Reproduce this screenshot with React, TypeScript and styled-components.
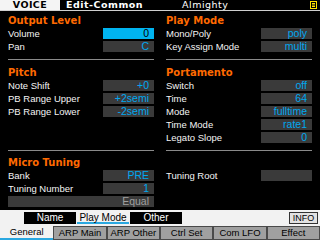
import React from 'react';
import styled, { createGlobalStyle } from 'styled-components';

const GlobalStyle = createGlobalStyle`
  html, body {
    margin: 0;
    padding: 0;
    background: #000;
  }
  * {
    box-sizing: border-box;
  }
`;

interface RowData {
    label?: string;
    value?: string;
    selected?: boolean;
    muted?: boolean;
    wide?: boolean;
}

interface ColumnData {
    title?: string;
    rows: RowData[];
}

const sections: { top: number; bottom: number; rule: boolean; left: ColumnData; right: ColumnData }[] = [
    {
        top: 4,
        bottom: 6,
        rule: true,
        left: {
            title: 'Output Level',
            rows: [
                { label: 'Volume', value: '0', selected: true },
                { label: 'Pan', value: 'C' },
            ],
        },
        right: {
            title: 'Play Mode',
            rows: [
                { label: 'Mono/Poly', value: 'poly' },
                { label: 'Key Assign Mode', value: 'multi' },
            ],
        },
    },
    {
        top: 7,
        bottom: 6,
        rule: true,
        left: {
            title: 'Pitch',
            rows: [
                { label: 'Note Shift', value: '+0' },
                { label: 'PB Range Upper', value: '+2semi' },
                { label: 'PB Range Lower', value: '-2semi' },
            ],
        },
        right: {
            title: 'Portamento',
            rows: [
                { label: 'Switch', value: 'off' },
                { label: 'Time', value: '64' },
                { label: 'Mode', value: 'fulltime' },
                { label: 'Time Mode', value: 'rate1' },
                { label: 'Legato Slope', value: '0' },
            ],
        },
    },
    {
        top: 6,
        bottom: 0,
        rule: false,
        left: {
            title: 'Micro Tuning',
            rows: [
                { label: 'Bank', value: 'PRE' },
                { label: 'Tuning Number', value: '1' },
                { value: 'Equal', muted: true, wide: true },
            ],
        },
        right: {
            title: '',
            rows: [{ label: 'Tuning Root', value: '' }],
        },
    },
];

const subTabs = [
    { name: 'Name', active: false },
    { name: 'Play Mode', active: true },
    { name: 'Other', active: false },
];

const mainTabs = ['General', 'ARP Main', 'ARP Other', 'Ctrl Set', 'Com LFO', 'Effect'];

const App: React.FC = () => {
    return (
        <>
            <GlobalStyle />
            <Screen>
                <Header>
                    <ModeBox>VOICE</ModeBox>
                    <PageName>Edit-Common</PageName>
                    <VoiceName>Almighty</VoiceName>
                    <MenuIcon width="8" height="8" viewBox="0 0 8 8">
                        <rect x="0.5" y="0.5" width="6" height="7" fill="none" stroke="#ffe000" strokeWidth="1" />
                        <line x1="2" y1="2.5" x2="5" y2="2.5" stroke="#ffe000" strokeWidth="1" />
                        <line x1="2" y1="4" x2="5" y2="4" stroke="#ffe000" strokeWidth="1" />
                        <line x1="2" y1="5.5" x2="5" y2="5.5" stroke="#ffe000" strokeWidth="1" />
                    </MenuIcon>
                </Header>
                <Body>
                    {sections.map((section, i) => (
                        <Section key={i}>
                            {[section.left, section.right].map((col, j) => (
                                <Column key={j} $top={section.top} $bottom={section.bottom} $rule={section.rule}>
                                    <Title>{col.title}</Title>
                                    {col.rows.map((row, k) => (
                                        <Row key={k}>
                                            {row.label && <Label>{row.label}</Label>}
                                            <ValueBox $selected={row.selected} $muted={row.muted} $wide={row.wide}>
                                                {row.value}
                                            </ValueBox>
                                        </Row>
                                    ))}
                                </Column>
                            ))}
                        </Section>
                    ))}
                </Body>
                <SubBar>
                    {subTabs.map((tab) => (
                        <SubTab key={tab.name} $active={tab.active}>{tab.name}</SubTab>
                    ))}
                    <InfoButton>INFO</InfoButton>
                </SubBar>
                <TabBar>
                    {mainTabs.map((tab, i) => (
                        <Tab key={tab} $active={i === 0}>{tab}</Tab>
                    ))}
                </TabBar>
            </Screen>
        </>
    );
};

export default App;

const Screen = styled.div`
  width: 320px;
  height: 240px;
  background: #000;
  display: flex;
  flex-direction: column;
  overflow: hidden;
  font-family: "Liberation Sans", Arial, sans-serif;
`;

const Header = styled.div`
  height: 11px;
  display: flex;
  align-items: flex-start;
  border-bottom: 1px solid #d0d0d0;
`;

const ModeBox = styled.div`
  width: 60px;
  height: 10px;
  background: #f4f4f4;
  color: #000;
  font-family: "DejaVu Sans", sans-serif;
  font-weight: bold;
  font-size: 9.5px;
  line-height: 10px;
  letter-spacing: 0.4px;
  text-align: center;
`;

const PageName = styled.div`
  width: 122px;
  height: 10px;
  padding-left: 6px;
  color: #fff;
  font-family: "DejaVu Sans", sans-serif;
  font-weight: bold;
  font-size: 9.5px;
  line-height: 10px;
  letter-spacing: 0.5px;
`;

const VoiceName = styled.div`
  height: 10px;
  color: #fff;
  font-family: "DejaVu Sans", sans-serif;
  font-size: 9.5px;
  line-height: 10px;
  letter-spacing: 0.5px;
`;

const MenuIcon = styled.svg`
  margin-left: auto;
  margin-right: 2px;
  margin-top: 1px;
`;

const Body = styled.div`
  flex: 1;
  display: flex;
  flex-direction: column;
`;

const Section = styled.div`
  display: grid;
  grid-template-columns: 146px 146px;
  column-gap: 12px;
  padding: 0 8px;
`;

const Column = styled.div<{ $top: number; $bottom: number; $rule: boolean }>`
  padding-top: ${(p) => p.$top}px;
  padding-bottom: ${(p) => p.$bottom}px;
  border-bottom: ${(p) => (p.$rule ? '1px solid #8a8a8a' : 'none')};
`;

const Title = styled.div`
  height: 12px;
  line-height: 12px;
  color: #ff6a00;
  font-family: "DejaVu Sans", sans-serif;
  font-weight: bold;
  font-size: 10px;
`;

const Row = styled.div`
  height: 13px;
  display: flex;
  align-items: center;
  justify-content: space-between;
`;

const Label = styled.span`
  color: #f4f4f4;
  font-size: 9.5px;
  white-space: nowrap;
`;

const ValueBox = styled.div<{ $selected?: boolean; $muted?: boolean; $wide?: boolean }>`
  width: ${(p) => (p.$wide ? '146px' : '51px')};
  height: 11px;
  margin-left: auto;
  padding-right: 5px;
  background: ${(p) => (p.$selected ? '#00b4f0' : '#3a3a3a')};
  color: ${(p) => (p.$selected ? '#000' : p.$muted ? '#a0a0a0' : '#00a8f0')};
  font-size: 10.5px;
  line-height: 11px;
  text-align: right;
  white-space: nowrap;
`;

const SubBar = styled.div`
  height: 16px;
  background: #f2f2f2;
  display: flex;
  align-items: center;
  padding-left: 24px;
`;

const SubTab = styled.div<{ $active: boolean }>`
  width: 52px;
  height: 12px;
  margin-right: 1px;
  background: ${(p) => (p.$active ? '#f2f2f2' : '#000')};
  color: ${(p) => (p.$active ? '#000' : '#fff')};
  border-bottom: ${(p) => (p.$active ? '2px solid #2aa8e0' : 'none')};
  font-size: 10px;
  line-height: 11px;
  text-align: center;
`;

const InfoButton = styled.div`
  margin-left: auto;
  margin-right: 2px;
  width: 29px;
  height: 12px;
  border: 1px solid #333;
  background: #e2e2e2;
  color: #000;
  font-size: 9px;
  line-height: 10px;
  text-align: center;
`;

const TabBar = styled.div`
  height: 14px;
  display: grid;
  grid-template-columns: repeat(6, 1fr);
  background: #f2f2f2;
`;

const Tab = styled.div<{ $active: boolean }>`
  background: ${(p) => (p.$active ? '#f2f2f2' : '#a0a0a0')};
  border: ${(p) => (p.$active ? 'none' : '1px solid #4a4a4a')};
  border-bottom: ${(p) => (p.$active ? '2px solid #2aa8e0' : '1px solid #4a4a4a')};
  color: #000;
  font-size: 9.5px;
  line-height: 12px;
  text-align: center;
  white-space: nowrap;
`;
